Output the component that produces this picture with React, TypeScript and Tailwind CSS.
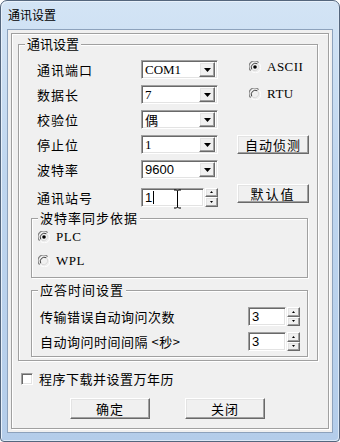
const cjk = "font-['Noto_Sans_CJK_SC','Noto_Sans',sans-serif]";
const serif = "font-['Liberation_Serif','Noto_Sans_CJK_SC',serif]";
const sans = "font-['Liberation_Sans',sans-serif]";

const sunken =
  "border border-t-[#a0a0a0] border-l-[#a0a0a0] border-r-white border-b-white shadow-[inset_1px_1px_0_#696969,inset_-1px_-1px_0_#e3e3e3] bg-white";
const raised =
  "border border-t-white border-l-white border-r-[#696969] border-b-[#696969] shadow-[inset_-1px_-1px_0_#a0a0a0,inset_1px_1px_0_#e3e3e3] bg-[#f0f0f0]";

function Combo({ value, font }: { value: string; font: string }) {
  return (
    <div className={`${sunken} flex h-[19px] w-[77px] items-center justify-between pl-[3px] pr-[2px]`}>
      <span className={`${font} text-[13px] leading-none text-black`}>{value}</span>
      <span className={`${raised} flex h-[15px] w-[16px] items-center justify-center`}>
        <svg width="7" height="4" viewBox="0 0 7 4">
          <path d="M0 0h7L3.5 4z" fill="#000" />
        </svg>
      </span>
    </div>
  );
}

function Spin() {
  return (
    <div className="flex h-[19px] w-[13px] flex-col">
      {[0, 1].map((i) => (
        <span key={i} className={`${raised} flex h-[9.5px] w-[13px] items-center justify-center`}>
          <svg width="3" height="2" viewBox="0 0 3 2">
            <path d={i === 0 ? "M0 2h3L1.5 0z" : "M0 0h3L1.5 2z"} fill="#000" />
          </svg>
        </span>
      ))}
    </div>
  );
}

function SpinEdit({ value, width, children }: { value: string; width: string; children?: React.ReactNode }) {
  return (
    <div className="flex items-center gap-[1px]">
      <div className={`${sunken} relative flex h-[19px] ${width} items-center pl-[3px]`}>
        <span className={`${sans} text-[13px] leading-none text-black`}>{value}</span>
        {children}
      </div>
      <Spin />
    </div>
  );
}

function Radio({ checked, label }: { checked?: boolean; label: string }) {
  return (
    <div className="flex h-[13px] items-center gap-[6px]">
      <svg width="12" height="12" viewBox="0 0 12 12">
        <circle cx="6" cy="6" r="5.5" fill="#f0f0f0" />
        <path d="M1.6 9.6A5.4 5.4 0 0 1 9.6 1.6" stroke="#808080" strokeWidth="1.2" fill="none" />
        <path d="M2.8 8.4A4.1 4.1 0 0 1 8.4 2.8" stroke="#404040" fill="none" />
        <path d="M10.3 2.6A5.4 5.4 0 0 1 2.6 10.3" stroke="#ffffff" fill="none" />
        <path d="M9.2 3.6A4.1 4.1 0 0 1 3.6 9.2" stroke="#d8d8d8" fill="none" />
        {checked && <circle cx="6" cy="6" r="1.8" fill="#000" />}
      </svg>
      <span className={`${serif} text-[13px] leading-none tracking-[0.5px] text-black`}>{label}</span>
    </div>
  );
}

function Group({ title, className, children }: { title: string; className: string; children: React.ReactNode }) {
  return (
    <div className={`relative border border-[#a0a0a0] shadow-[inset_1px_1px_0_#fff,1px_1px_0_#fff] ${className}`}>
      <span className={`absolute left-[6px] top-[-9px] bg-[#f0f0f0] px-[2px] ${cjk} text-[13px] leading-[16px] text-black`}>
        {title}
      </span>
      {children}
    </div>
  );
}

function Button({ label, className }: { label: string; className: string }) {
  return (
    <div className={`${raised} flex items-center justify-center ${className} ${cjk} text-[13px] leading-none text-black`}>
      {label}
    </div>
  );
}

export default function App() {
  const rows = [
    { label: "通讯端口", value: "COM1", font: serif },
    { label: "数据长", value: "7", font: serif },
    { label: "校验位", value: "偶", font: cjk },
    { label: "停止位", value: "1", font: serif },
    { label: "波特率", value: "9600", font: sans },
  ];

  return (
    <div className="flex h-[442px] w-[340px] flex-col overflow-hidden rounded-t-[7px] rounded-b-[4px] border border-[#54667d] bg-[linear-gradient(180deg,#d3e4f5_0%,#bfd6ef_40%,#b4cdea_100%)] shadow-[inset_1px_1px_0_#e8f1fb,inset_-1px_-1px_0_#dbe8f6]">
      <div className={`flex h-[28px] shrink-0 items-center pl-[7px] ${cjk} text-[12px] text-black`}>通讯设置</div>

      <div className="mx-[6px] h-[404px] border border-[#8da2bc] bg-[#f0f0f0] p-[3px]">
        <div className="flex h-full flex-col border border-[#a0a0a0] shadow-[inset_1px_1px_0_#fff,1px_1px_0_#fff]">
          <Group title="通讯设置" className="ml-[6px] mt-[10px] h-[317px] w-[300px]">
            <div className="flex pt-[15px]">
              <div className="flex flex-col gap-[6px] pl-[18px]">
                {rows.map((r) => (
                  <div key={r.label} className="flex h-[19px] items-center">
                    <span className={`w-[104px] ${cjk} text-[13px] leading-none tracking-[1px] text-black`}>{r.label}</span>
                    <Combo value={r.value} font={r.font} />
                  </div>
                ))}
                <div className="mt-[2px] flex h-[20px] items-center">
                  <span className={`w-[104px] ${cjk} text-[13px] leading-none tracking-[1px] text-black`}>通讯站号</span>
                  <SpinEdit value="1" width="w-[63px]">
                    <span className="ml-[1px] h-[13px] w-[1px] bg-black" />
                    <svg className="absolute left-[31px] top-[0px]" width="9" height="20" viewBox="0 0 9 20">
                      <path d="M1 1h2.5L4.5 2 5.5 1H8M4.5 2v16M1 19h2.5l1-1 1 1H8" stroke="#000" fill="none" />
                    </svg>
                  </SpinEdit>
                </div>
              </div>

              <div className="ml-[19px] flex flex-col">
                <div className="pl-[12px]">
                  <Radio checked label="ASCII" />
                </div>
                <div className="mt-[14px] pl-[12px]">
                  <Radio label="RTU" />
                </div>
                <Button label="自动侦测" className="mt-[35px] h-[19px] w-[72px] tracking-[1px]" />
                <Button label="默认值" className="mt-[30px] h-[19px] w-[72px] tracking-[2px]" />
              </div>
            </div>

            <Group title="波特率同步依据" className="ml-[12px] mt-[11px] h-[60px] w-[277px] tracking-[1px]">
              <div className="flex flex-col gap-[11px] pl-[6px] pt-[11px]">
                <Radio checked label="PLC" />
                <Radio label="WPL" />
              </div>
            </Group>

            <Group title="应答时间设置" className="ml-[12px] mt-[12px] h-[67px] w-[277px] tracking-[1px]">
              <div className="flex flex-col gap-[6px] pl-[8px] pt-[16px]">
                <div className="flex h-[19px] items-center">
                  <span className={`w-[208px] ${cjk} text-[13px] leading-none tracking-[0.5px] text-black`}>传输错误自动询问次数</span>
                  <SpinEdit value="3" width="w-[38px]" />
                </div>
                <div className="flex h-[19px] items-center">
                  <span className={`w-[208px] ${cjk} text-[13px] leading-none tracking-[0.5px] text-black`}>自动询问时间间隔 &lt;秒&gt;</span>
                  <SpinEdit value="3" width="w-[38px]" />
                </div>
              </div>
            </Group>
          </Group>

          <div className="ml-[9px] mt-[11px] flex items-center gap-[6px]">
            <span className={`${sunken} h-[12px] w-[12px]`} />
            <span className={`${cjk} text-[13px] leading-none tracking-[0.5px] text-black`}>程序下载并设置万年历</span>
          </div>

          <div className="mt-[13px] flex pl-[58px]">
            <Button label="确定" className="h-[21px] w-[80px] tracking-[1px]" />
            <Button label="关闭" className="ml-[35px] h-[21px] w-[80px] tracking-[1px]" />
          </div>
        </div>
      </div>
    </div>
  );
}
